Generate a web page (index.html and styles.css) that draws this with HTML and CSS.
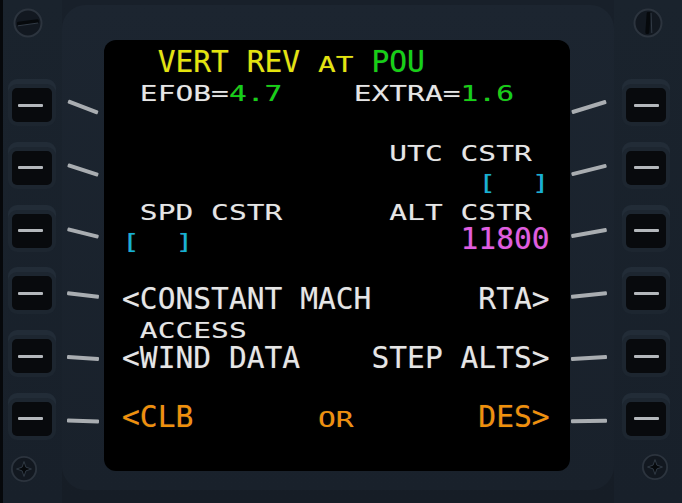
FILE: index.html
```html
<!DOCTYPE html>
<html lang="en">
<head>
    <meta charset="UTF-8">
    <meta name="viewport" content="width=device-width, initial-scale=1.0">
    <title>MCDU - Vert Rev</title>
    <link rel="stylesheet" href="styles.css">
</head>
<body>
    <div class="mcdu">
        <div class="keys keys-left">
            <svg class="screw screw-top" viewBox="0 0 30 30">
                <circle cx="15" cy="15" r="13.5" fill="#121820" stroke="#2c343e" stroke-width="2"/>
                <rect x="4" y="12.5" width="22" height="4" rx="1.5" fill="#06090c" transform="rotate(-8 15 15)"/>
                <line x1="5" y1="17.8" x2="25" y2="15" stroke="#313a45" stroke-width="1"/>
            </svg>
            <div class="key-stack">
                <button class="lsk"><span class="dash"></span></button>
                <button class="lsk"><span class="dash"></span></button>
                <button class="lsk"><span class="dash"></span></button>
                <button class="lsk"><span class="dash"></span></button>
                <button class="lsk"><span class="dash"></span></button>
                <button class="lsk"><span class="dash"></span></button>
            </div>
            <svg class="screw screw-bottom" viewBox="0 0 30 30">
                <circle cx="15" cy="15" r="13" fill="#121820" stroke="#2c343e" stroke-width="2"/>
                <path d="M15 7 L17 13 L23 15 L17 17 L15 23 L13 17 L7 15 L13 13 Z" fill="#06090c" stroke="#333c47" stroke-width="1"/>
            </svg>
        </div>

        <div class="bezel">
            <div class="leaders leaders-left">
                <span class="leader"></span>
                <span class="leader"></span>
                <span class="leader"></span>
                <span class="leader"></span>
                <span class="leader"></span>
                <span class="leader"></span>
            </div>

            <div class="screen">
                <div class="row"><span class="y">  VERT REV </span><span class="s y">AT</span> <span class="g">POU</span></div>
                <div class="row"><span class="s"> EFOB=<span class="g">4.7</span>    EXTRA=<span class="g">1.6</span></span></div>
                <div class="row"></div>
                <div class="row"><span class="s">               UTC CSTR</span></div>
                <div class="row"><span class="s c">                    [  ]</span></div>
                <div class="row"><span class="s"> SPD CSTR      ALT CSTR</span></div>
                <div class="row"><span class="s c">[  ]</span>               <span class="m">11800</span></div>
                <div class="row"></div>
                <div class="row">&lt;CONSTANT MACH      RTA&gt;</div>
                <div class="row"><span class="s"> ACCESS</span></div>
                <div class="row">&lt;WIND DATA    STEP ALTS&gt;</div>
                <div class="row"></div>
                <div class="row o">&lt;CLB       <span class="s">OR</span>       DES&gt;</div>
                <div class="row"></div>
            </div>

            <div class="leaders leaders-right">
                <span class="leader"></span>
                <span class="leader"></span>
                <span class="leader"></span>
                <span class="leader"></span>
                <span class="leader"></span>
                <span class="leader"></span>
            </div>
        </div>

        <div class="keys keys-right">
            <svg class="screw screw-top" viewBox="0 0 30 30">
                <circle cx="15" cy="15" r="13.5" fill="#121820" stroke="#2c343e" stroke-width="2"/>
                <rect x="13" y="4" width="4" height="22" rx="1.5" fill="#06090c" transform="rotate(4 15 15)"/>
                <line x1="18" y1="5" x2="18.8" y2="25" stroke="#313a45" stroke-width="1"/>
            </svg>
            <div class="key-stack">
                <button class="lsk"><span class="dash"></span></button>
                <button class="lsk"><span class="dash"></span></button>
                <button class="lsk"><span class="dash"></span></button>
                <button class="lsk"><span class="dash"></span></button>
                <button class="lsk"><span class="dash"></span></button>
                <button class="lsk"><span class="dash"></span></button>
            </div>
            <svg class="screw screw-bottom" viewBox="0 0 30 30">
                <circle cx="15" cy="15" r="13" fill="#121820" stroke="#2c343e" stroke-width="2"/>
                <path d="M15 7 L17 13 L23 15 L17 17 L15 23 L13 17 L7 15 L13 13 Z" fill="#06090c" stroke="#333c47" stroke-width="1"/>
            </svg>
        </div>
    </div>
</body>
</html>
```

FILE: styles.css
```css
* {
    margin: 0;
    padding: 0;
    box-sizing: border-box;
}
body
{
    width: 682px;
    height: 503px;
    overflow: hidden;
    background: #141b23;
}
.mcdu
{
    display: grid;
    grid-template-columns: 62px 552px 68px;
    height: 503px;
    background: linear-gradient(180deg, #18202a 0%, #161d26 100%);
}

/* side key columns */
.keys
{
    display: flex;
    flex-direction: column;
    background: linear-gradient(180deg, #1a232d 0%, #18202a 100%);
}
.keys-left
{
    border-left: 3px solid #06080b;
    padding-left: 9px;
}
.keys-right
{
    padding-left: 12px;
}
.screw
{
    width: 30px;
    height: 30px;
    display: block;
}
.keys-left .screw-top
{
    margin: 8px 0 0 1px;
}
.keys-left .screw-bottom
{
    margin: 19px 0 0 -2px;
    width: 28px;
    height: 28px;
}
.keys-right .screw-top
{
    margin: 8px 0 0 7px;
}
.keys-right .screw-bottom
{
    margin: 17px 0 0 15px;
    width: 28px;
    height: 28px;
}
.key-stack
{
    display: flex;
    flex-direction: column;
    gap: 28.8px;
    margin-top: 50px;
}
.lsk
{
    width: 40px;
    height: 34px;
    background: #080a0d;
    border: none;
    border-radius: 5px;
    box-shadow: 0 0 0 4px #1d2630, 0 -5px 0 4px #222c37;
    display: flex;
    align-items: center;
    justify-content: center;
}
.keys-left .lsk
{
    padding-right: 4px;
}
.dash
{
    width: 25px;
    height: 3px;
    border-radius: 1px;
    background: #b4b8bc;
}

/* raised bezel around the display */
.bezel
{
    display: grid;
    grid-template-columns: 42px 466px 44px;
    margin: 5px 0 13px;
    border-radius: 24px;
    background: linear-gradient(180deg, #1c2530 0%, #19212b 100%);
}
.leaders
{
    display: flex;
    flex-direction: column;
    gap: 28.8px;
    padding-top: 85px;
}
.leader
{
    display: block;
    height: 34px;
}
.leader::after
{
    content: "";
    display: block;
    height: 4px;
    margin-top: 15px;
    border-radius: 1px;
    background: #a9adb1;
}
.leaders-left .leader::after
{
    width: 32px;
    margin-left: 5px;
}
.leaders-right .leader::after
{
    width: 36px;
    margin-left: 1px;
}
.leaders-left .leader:nth-child(1)::after { transform: rotate(21deg); }
.leaders-left .leader:nth-child(2)::after { transform: rotate(18deg); }
.leaders-left .leader:nth-child(3)::after { transform: rotate(14deg); }
.leaders-left .leader:nth-child(4)::after { transform: rotate(7deg); }
.leaders-left .leader:nth-child(5)::after { transform: rotate(3.5deg); }
.leaders-left .leader:nth-child(6)::after { transform: rotate(1.5deg); }
.leaders-right .leader:nth-child(1)::after { transform: rotate(-17deg); }
.leaders-right .leader:nth-child(2)::after { transform: rotate(-14deg); }
.leaders-right .leader:nth-child(3)::after { transform: rotate(-10deg); }
.leaders-right .leader:nth-child(4)::after { transform: rotate(-6deg); }
.leaders-right .leader:nth-child(5)::after { transform: rotate(-3deg); }
.leaders-right .leader:nth-child(6)::after { transform: rotate(-1deg); }

/* display */
.screen
{
    margin-top: 35px;
    height: 431px;
    background: #000;
    border-radius: 12px;
    padding: 7.9px 0 0 18px;
    font-family: "DejaVu Sans Mono", monospace;
    font-size: 29.6px;
    color: #e6e6e6;
    text-shadow: 0 0 1px rgba(255, 255, 255, 0.3);
}
.row
{
    height: 29.6px;
    line-height: 29.6px;
    white-space: pre;
}
.s
{
    display: inline-block;
    line-height: 22px;
    transform: scaleY(0.71);
    transform-origin: 0 21.2px;
}
.s .g
{
    color: #14d214;
}
.y { color: #e4e40c; }
.g { color: #14d214; }
.c { color: #12b2d6; }
.m { color: #e25ce2; }
.o { color: #f0900a; }
```
